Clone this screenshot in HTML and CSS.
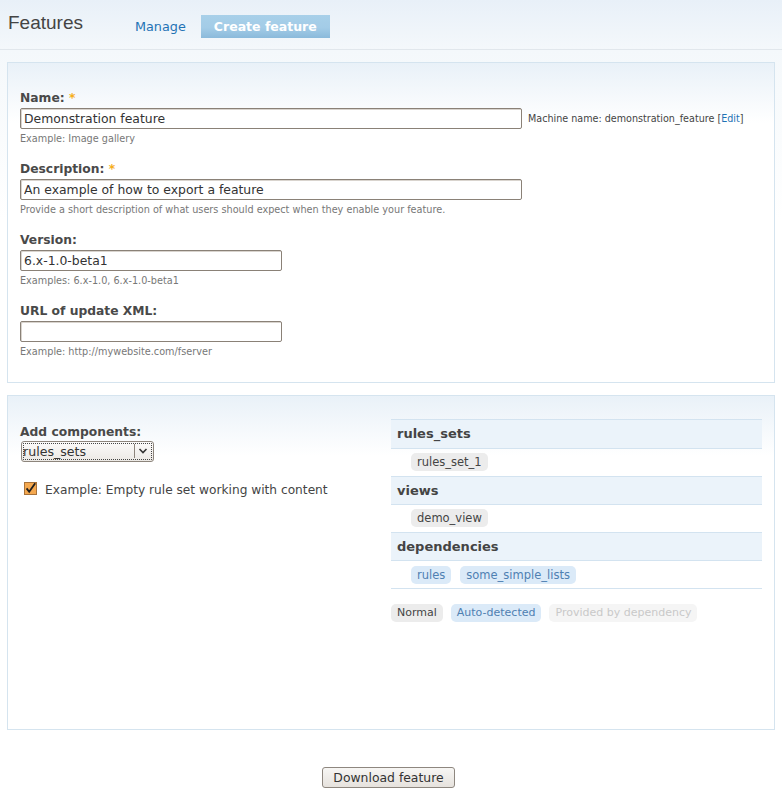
FILE: index.html
```html
<!DOCTYPE html>
<html lang="en">
<head>
<meta charset="utf-8">
<title>Features</title>
<link rel="stylesheet" href="styles.css">
</head>
<body>
<header class="page-header">
  <h1 class="page-title">Features</h1>
  <ul class="tabs">
    <li><a class="tab" href="#">Manage</a></li>
    <li><a class="tab tab-active" href="#">Create feature</a></li>
  </ul>
</header>
<main class="content">
  <form class="feature-form">
    <fieldset class="panel panel-info">
      <div class="form-item">
        <label class="form-label">Name: <span class="req">*</span></label>
        <div class="field-row">
          <input class="text text-wide" type="text" value="Demonstration feature">
          <span class="machine-name">Machine name: demonstration_feature [<a href="#">Edit</a>]</span>
        </div>
        <div class="help">Example: Image gallery</div>
      </div>
      <div class="form-item">
        <label class="form-label">Description: <span class="req">*</span></label>
        <div class="field-row">
          <input class="text text-wide" type="text" value="An example of how to export a feature">
        </div>
        <div class="help">Provide a short description of what users should expect when they enable your feature.</div>
      </div>
      <div class="form-item">
        <label class="form-label">Version:</label>
        <div class="field-row">
          <input class="text text-short" type="text" value="6.x-1.0-beta1">
        </div>
        <div class="help">Examples: 6.x-1.0, 6.x-1.0-beta1</div>
      </div>
      <div class="form-item">
        <label class="form-label">URL of update XML:</label>
        <div class="field-row">
          <input class="text text-short" type="text" value="">
        </div>
        <div class="help">Example: http://mywebsite.com/fserver</div>
      </div>
    </fieldset>

    <fieldset class="panel panel-components">
      <div class="components">
        <div class="comp-left">
          <label class="form-label">Add components:</label>
          <div class="select-wrap">
            <select class="select"><option>rules_sets</option></select>
            <svg class="select-arrow" width="19" height="18" viewBox="0 0 19 18"><line x1="0.5" y1="2" x2="0.5" y2="16" stroke="#8d857c" stroke-width="1"/><path d="M5.5 7 L9 10.5 L12.5 7" fill="none" stroke="#333" stroke-width="1.6"/></svg>
          </div>
          <label class="check">
            <svg class="check-box" width="13" height="13" viewBox="0 0 13 13"><rect x="0.5" y="0.5" width="12" height="12" fill="#f4a84f" stroke="#a8723a"/><path d="M2.6 6.4 L5.2 9.8 L11.2 1.2" fill="none" stroke="#1e1e1e" stroke-width="1.8"/></svg>
            <span>Example: Empty rule set working with content</span>
          </label>
        </div>
        <div class="comp-right">
          <div class="comp-list">
            <div class="comp-head">rules_sets</div>
            <div class="comp-body"><span class="tag">rules_set_1</span></div>
            <div class="comp-head">views</div>
            <div class="comp-body"><span class="tag">demo_view</span></div>
            <div class="comp-head">dependencies</div>
            <div class="comp-body"><span class="tag tag-auto">rules</span><span class="tag tag-auto">some_simple_lists</span></div>
          </div>
          <div class="legend">
            <span class="tag">Normal</span>
            <span class="tag tag-auto">Auto-detected</span>
            <span class="tag tag-dep">Provided by dependency</span>
          </div>
        </div>
      </div>
    </fieldset>

    <div class="actions">
      <button class="button" type="button">Download feature</button>
    </div>
  </form>
</main>
</body>
</html>
```

FILE: styles.css
```css
* {
  box-sizing: border-box;
}

html,
body {
  margin: 0;
  padding: 0;
}

body {
  width: 782px;
  min-height: 804px;
  font-family: "DejaVu Sans", Verdana, sans-serif;
  font-size: 13px;
  color: #444;
  background: linear-gradient(#f4f8fb 50px, #f7fafc 90px, #fff 220px) no-repeat;
}

a {
  color: #1f73b5;
  text-decoration: none;
}

/* Header */
.page-header {
  display: flex;
  align-items: flex-start;
  height: 50px;
  padding: 0 8px;
  border-bottom: 1px solid #e1e7ec;
  background: linear-gradient(#e8f0f8, #f4f8fb);
}

.page-title {
  margin: 11px 0 0;
  font: normal 19px/23px "Liberation Sans", Arial, sans-serif;
  color: #444;
}

.tabs {
  display: flex;
  gap: 4px;
  list-style: none;
  margin: 15px 0 0 41px;
  padding: 0;
}

.tab {
  display: block;
  height: 23px;
  line-height: 23px;
  padding: 0 11px;
  font-size: 12.8px;
  color: #1f73b5;
}

.tab-active {
  padding: 0 13px;
  font-size: 12.5px;
  font-weight: bold;
  color: #fff;
  background: linear-gradient(#a8d0e9 0, #a3cce7 55%, #8bbadb 100%);
}

/* Content */
.content {
  padding: 12px 7px 0;
}

.feature-form {
  margin: 0;
}

.panel {
  margin: 0;
  min-width: 0;
  border: 1px solid #d5e4ef;
  background: linear-gradient(#e9f1f8, #fff 60px);
}

.panel + .panel {
  margin-top: 12px;
}

.panel-info {
  padding: 27px 12px 24px;
}

.panel-components {
  padding: 23px 12px 12px;
}

.form-item {
  margin-bottom: 16px;
}

.form-item:last-child {
  margin-bottom: 0;
}

.form-label {
  display: block;
  font-weight: bold;
  font-size: 12.3px;
  line-height: 16px;
  margin-bottom: 2px;
  color: #494949;
}

.req {
  color: #f5ae1a;
}

.field-row {
  display: flex;
  align-items: center;
  gap: 6px;
}

.text {
  height: 21px;
  margin: 0;
  padding: 0 3px;
  font-family: "DejaVu Sans", Verdana, sans-serif;
  font-size: 12.4px;
  color: #333;
  background: #fff;
  border: 1px solid #8a8177;
  border-radius: 2px;
  box-shadow: inset 1px 1px 0 #d9d4ce;
}

.text-wide {
  width: 502px;
}

.text-short {
  width: 262px;
}

.machine-name {
  font-size: 9.6px;
  color: #444;
}

.help {
  margin-top: 3px;
  font-size: 9.7px;
  line-height: 13px;
  color: #777;
}

/* Components */
.components {
  display: grid;
  grid-template-columns: 1fr 1fr;
  min-height: 298px;
}

.comp-left {
  padding-top: 5px;
}

.comp-left .form-label {
  margin-bottom: 1px;
}

.select-wrap {
  position: relative;
  width: 133px;
  height: 21px;
  margin-left: 1px;
}

.select {
  appearance: none;
  -webkit-appearance: none;
  display: block;
  width: 100%;
  height: 21px;
  margin: 0;
  padding: 0 0 0 1px;
  font-family: "DejaVu Sans", Verdana, sans-serif;
  font-size: 12.6px;
  line-height: 19px;
  color: #333;
  border: 1px solid #8d857c;
  border-radius: 3px;
  background: linear-gradient(#fbfaf9, #ece9e5);
  outline: 1px dotted #444;
  outline-offset: -3px;
}

.select-arrow {
  position: absolute;
  top: 1px;
  right: 1px;
  pointer-events: none;
}

.check {
  display: flex;
  align-items: center;
  gap: 8px;
  margin-top: 20px;
  padding-left: 4px;
  line-height: 16px;
  font-size: 12.2px;
  color: #444;
}

.check-box {
  flex: none;
  margin-top: -3px;
}

.comp-list {
  border-top: 1px solid #d3e3f0;
}

.comp-head {
  height: 29px;
  padding: 0 6px;
  line-height: 28px;
  font-weight: bold;
  font-size: 13px;
  color: #444;
  background: #ebf3fa;
  border-bottom: 1px solid #d3e3f0;
}

.comp-head:nth-child(n+3) {
  height: 28px;
  line-height: 27px;
}

.comp-body {
  display: flex;
  gap: 9px;
  height: 28px;
  padding: 4px 20px 0;
  border-bottom: 1px solid #d3e3f0;
}

.comp-body:last-child {
  padding-top: 5px;
}

.tag {
  display: inline-block;
  height: 18px;
  padding: 0 6px;
  line-height: 18px;
  font-size: 11.5px;
  color: #444;
  background: #ececec;
  border-radius: 5px;
}

.tag-auto {
  color: #4f80b2;
  background: #dbeaf8;
}

.tag-dep {
  color: #c9c9c9;
  background: #f5f5f5;
}

.legend {
  display: flex;
  gap: 8px;
  margin-top: 15px;
}

.legend .tag {
  font-size: 11px;
}

/* Actions */
.actions {
  margin-top: 37px;
  padding-right: 5px;
  text-align: center;
}

.button {
  height: 21px;
  padding: 0 10px;
  font-family: "DejaVu Sans", Verdana, sans-serif;
  font-size: 12.4px;
  color: #333;
  border: 1px solid #8e877f;
  border-radius: 3px;
  background: linear-gradient(#f7f6f4, #e6e2dd);
}
```
